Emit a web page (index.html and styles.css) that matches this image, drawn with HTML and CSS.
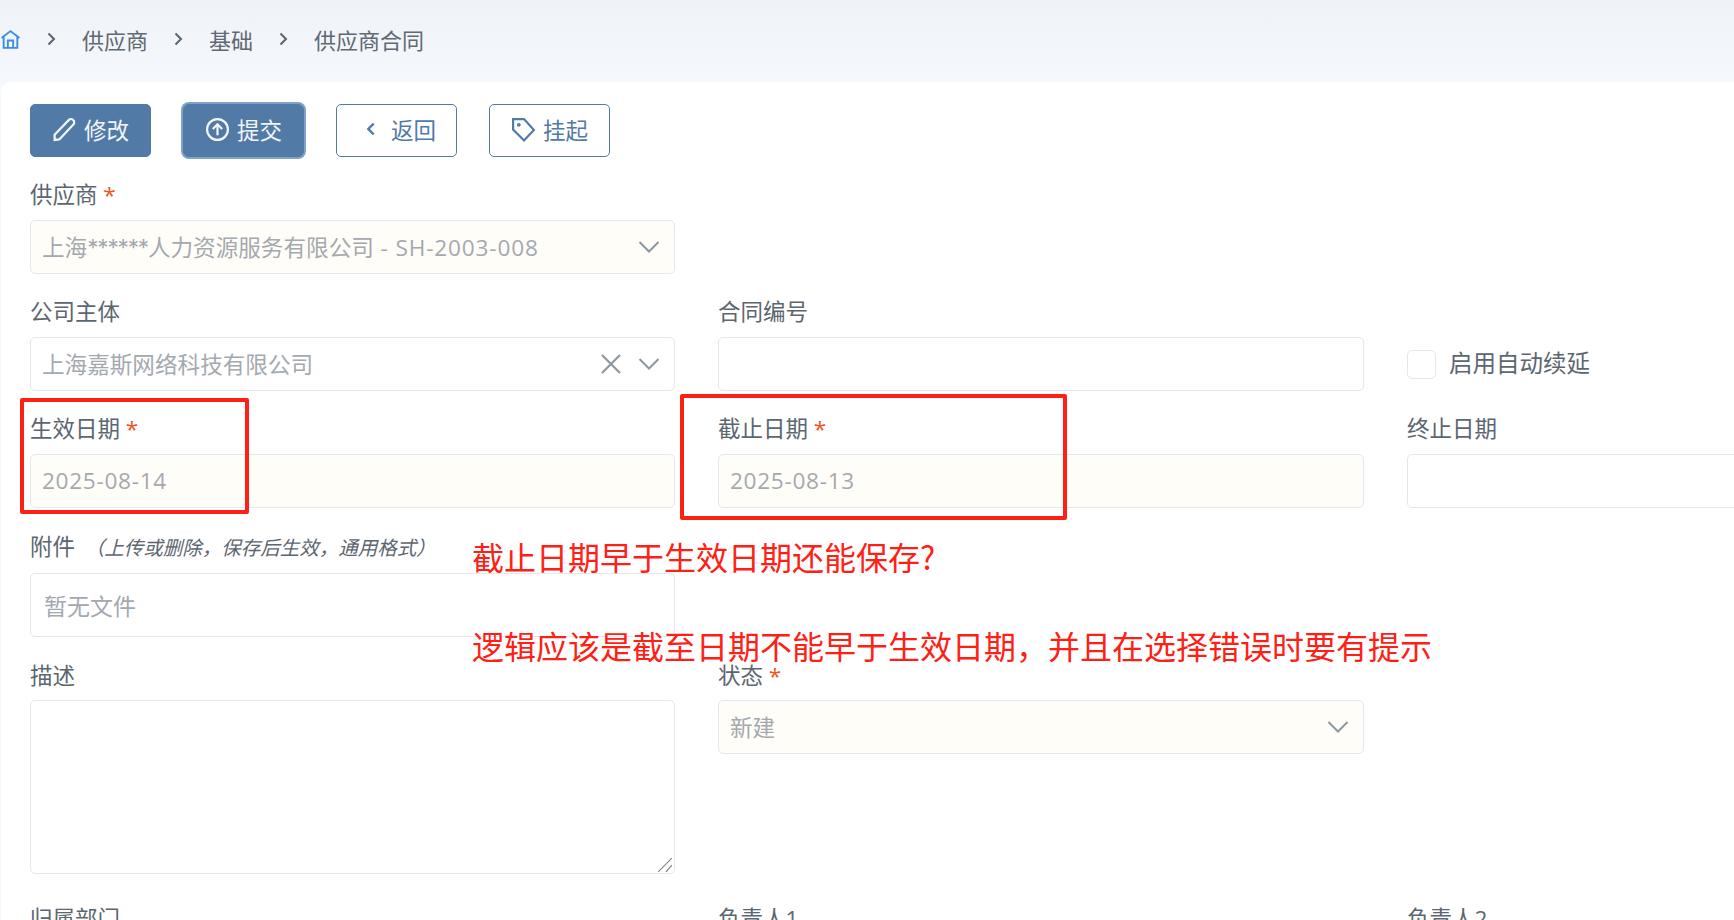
FILE: index.html
```html
<!DOCTYPE html>
<html lang="zh-CN">
<head>
<meta charset="utf-8">
<title>供应商合同</title>
<link rel="stylesheet" href="styles.css">
</head>
<body>
<header class="crumbs">
  <svg class="home" viewBox="0 0 20 20"><path d="M1.500 8.500 10 2l8.500 6.500M3.500 7.500V18h13V7.500M7.500 18v-7h5v7"/></svg>
  <svg class="sep" viewBox="0 0 13 14"><path d="M3.500 1.500 9 7l-5.500 5.500"/></svg>
  <span>供应商</span>
  <svg class="sep" viewBox="0 0 13 14"><path d="M3.500 1.500 9 7l-5.500 5.500"/></svg>
  <span>基础</span>
  <svg class="sep" viewBox="0 0 13 14"><path d="M3.500 1.500 9 7l-5.500 5.500"/></svg>
  <span>供应商合同</span>
</header>
<main class="card">
  <div class="toolbar">
    <button class="btn solid"><svg viewBox="0 0 24 24"><path d="M2.500 17 16 3a3 3 0 0 1 4.500 4.200L7 21.500l-4.500.5z"/></svg><span>修改</span></button>
    <button class="btn solid focus"><svg viewBox="0 0 24 24"><circle cx="12" cy="12" r="10"/><path d="M12 17.500V7M7.500 11.500 12 7l4.500 4.500"/></svg><span>提交</span></button>
    <button class="btn line"><svg class="small" viewBox="0 0 24 24"><path d="M16 4 8 12l8 8"/></svg><span>返回</span></button>
    <button class="btn line"><svg viewBox="0 0 24 24"><path d="M2 2h10.500l9.500 10.500-9.500 10L2 12z"/><circle cx="7.500" cy="7.500" r=".8"/></svg><span>挂起</span></button>
  </div>
  <form class="grid">
    <div class="field wide-row"><label>供应商 <em>*</em></label>
      <div class="box ro"><span>上海<span class="stars">******</span>人力资源服务有限公司<span class="lat-wide"> - SH-2003-008</span></span><svg class="chev" viewBox="0 0 22 14"><path d="M1.500 2 11 11.500 20.500 2"/></svg></div></div>
    <div class="field"><label>公司主体</label>
      <div class="box"><span>上海嘉斯网络科技有限公司</span><svg class="clear" viewBox="0 0 22 22"><path d="M2 2l18 18M20 2 2 20"/></svg><svg class="chev" viewBox="0 0 22 14"><path d="M1.500 2 11 11.500 20.500 2"/></svg></div></div>
    <div class="field"><label>合同编号</label><div class="box"></div></div>
    <div class="check"><span class="tick"></span><span class="check-text">启用自动续延</span></div>
    <div class="field"><label>生效日期 <em>*</em></label><div class="box ro"><span class="lat">2025-08-14</span></div></div>
    <div class="field"><label>截止日期 <em>*</em></label><div class="box ro"><span class="lat">2025-08-13</span></div></div>
    <div class="field"><label>终止日期</label><div class="box"></div></div>
    <div class="field wide-row low"><label>附件 <i>（上传或删除，保存后生效，通用格式）</i></label><div class="box file"><span>暂无文件</span></div></div>
    <div class="field low"><label>描述</label>
      <div class="area-wrap"><textarea class="area"></textarea><svg class="grip" viewBox="0 0 14 14"><path d="M0 14 14 0M8 14l6-7"/></svg></div></div>
    <div class="field low"><label>状态 <em>*</em></label><div class="box ro"><span>新建</span><svg class="chev" viewBox="0 0 22 14"><path d="M1.500 2 11 11.500 20.500 2"/></svg></div></div>
    <div class="field spacer"></div>
    <div class="field"><label>归属部门</label><div class="box"></div></div>
    <div class="field"><label>负责人1</label><div class="box"></div></div>
    <div class="field"><label>负责人2</label><div class="box"></div></div>
  </form>
</main>
<div class="mark mark-a"></div>
<div class="mark mark-b"></div>
<p class="note note-a">截止日期早于生效日期还能保存?</p>
<p class="note note-b">逻辑应该是截至日期不能早于生效日期，并且在选择错误时要有提示</p>
</body>
</html>
```
FILE: styles.css
```css
* { box-sizing: border-box; }
html, body { height: 100%; }
body {
  margin: 0;
  height: 920px;
  overflow: hidden;
  position: relative;
  background: linear-gradient(180deg, #eff2f7 0, #f5f8fd 82px);
  font-family: "Open Sans", "Noto Sans CJK SC", sans-serif;
  font-size: 22.5px;
  color: #5c6670;
}
svg { fill: none; stroke: currentColor; flex: none; }

.crumbs {
  height: 82px;
  padding-bottom: 4px;
  display: flex;
  align-items: center;
  gap: 24px;
  font-size: 22px;
  color: #606972;
}
.home { width: 21px; height: 21px; color: #3a8ee6; stroke-width: 1.8; }
.sep { width: 13px; height: 14px; color: #5a6570; stroke-width: 2; }

.card {
  margin-left: 1px;
  height: 838px;
  padding: 22px 0 0 29px;
  background: #fff;
  border-radius: 10px 0 0 0;
}
.toolbar { display: flex; gap: 32px; height: 53px; align-items: center; }
.btn {
  width: 121px;
  height: 53px;
  display: flex;
  align-items: center;
  justify-content: center;
  gap: 7px;
  border-radius: 5px;
  font: inherit;
  padding: 0 0 3px;
}
.btn svg { width: 25px; height: 25px; stroke-width: 2.1; }
.btn svg.small { width: 16px; height: 20px; stroke-width: 3.6; margin: 0 5px 0 6px; }
.solid { background: #527aa6; border: 1px solid #527aa6; color: #f2f5f9; }
.focus { box-shadow: 0 0 0 2px #7ea3cb; border-radius: 6px; }
.line { background: #fff; border: 1px solid #527aa6; color: #527aa6; }

.grid {
  display: grid;
  grid-template-columns: 645px 646px 646px;
  column-gap: 43px;
  row-gap: 23px;
  margin-top: 23px;
  align-items: start;
}
.field { display: flex; flex-direction: column; }
.field label { height: 30px; line-height: 29px; margin-bottom: 10px; white-space: nowrap; }
.field.low label { line-height: 31px; }
.field label em { color: #f4511e; font-style: normal; }
.field label i { font-size: 19.5px; margin-left: 4px; }
.wide-row { grid-column: 1 / -1; width: 645px; }
.spacer { height: 0; }

.box {
  height: 54px;
  display: flex;
  align-items: center;
  padding: 0 14px 1px 11px;
  border: 1px solid #e4e7ed;
  border-radius: 5px;
  background: #fff;
  color: #a4a9af;
  font-size: 22.6px;
  white-space: nowrap;
}
.lat { letter-spacing: .7px; }
.lat-wide { letter-spacing: .85px; }
.stars { font-family: Inter, sans-serif; letter-spacing: -1.2px; }
.ro { background: #fffdf8; }
.file { height: 64px; margin-top: 2px; padding-left: 13px; font-size: 23px; }
.chev { width: 22px; height: 14px; margin-left: auto; color: #8f979e; stroke-width: 2; }
.clear { width: 22px; height: 22px; margin-left: auto; color: #8f979e; stroke-width: 2.2; }
.clear + .chev { margin-left: 16px; }
.area-wrap { position: relative; margin-bottom: 7px; }
.area {
  display: block;
  width: 100%;
  height: 174px;
  margin: 0;
  border: 1px solid #e4e7ed;
  border-radius: 5px;
  background: #fff;
  resize: none;
  outline: none;
}
.grip { position: absolute; right: 3px; bottom: 2px; width: 14px; height: 14px; color: #8a8a8a; stroke-width: 1.2; }
.check { height: 54px; margin-top: 40px; display: flex; align-items: center; gap: 13px; }
.check-text { font-size: 23.5px; margin-bottom: 4px; }
.tick { width: 29px; height: 29px; border: 1px solid #e4e7ed; border-radius: 5px; background: #fff; }

.mark { position: absolute; border: 4px solid #ff2015; border-radius: 2px; }
.mark-a { left: 20px; top: 398px; width: 229px; height: 116px; }
.mark-b { left: 680px; top: 394px; width: 387px; height: 126px; }
.note {
  position: absolute;
  left: 472px;
  margin: 0;
  font-size: 32px;
  line-height: 44px;
  color: #ff2015;
  white-space: nowrap;
  font-family: "Noto Sans CJK SC", sans-serif;
}
.note-a { top: 534px; }
.note-b { top: 623px; }
```
